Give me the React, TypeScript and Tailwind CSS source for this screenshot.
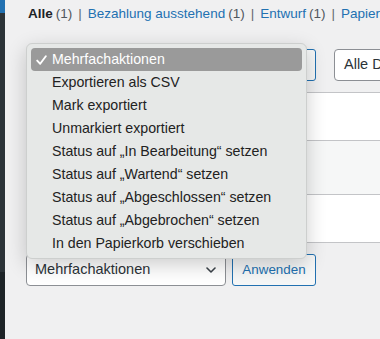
import React from 'react';

const menuItems = [
  'Mehrfachaktionen',
  'Exportieren als CSV',
  'Mark exportiert',
  'Unmarkiert exportiert',
  'Status auf „In Bearbeitung“ setzen',
  'Status auf „Wartend“ setzen',
  'Status auf „Abgeschlossen“ setzen',
  'Status auf „Abgebrochen“ setzen',
  'In den Papierkorb verschieben',
];

const Chevron = () => (
  <svg width="10" height="6" viewBox="0 0 10 6" fill="none">
    <path d="M1 1 L5 5 L9 1" stroke="#3c434a" strokeWidth="1.6" strokeLinecap="round" strokeLinejoin="round" />
  </svg>
);

const Check = () => (
  <svg width="11" height="10" viewBox="0 0 11 10" fill="none">
    <path d="M1.2 5.6 L4.2 8.8 L9.8 1.2" stroke="#ffffff" strokeWidth="1.9" strokeLinecap="round" strokeLinejoin="round" />
  </svg>
);

const BulkSelect = () => (
  <div className="flex h-[32px] w-[200px] shrink-0 items-center justify-between rounded-[4px] border border-[#8c8f94] bg-white pl-[8px] pr-[9px] text-[14.5px] text-[#2c3338]">
    <span>Mehrfachaktionen</span>
    <Chevron />
  </div>
);

const ApplyButton = () => (
  <button className="ml-[6px] flex h-[32px] w-[84px] shrink-0 items-center justify-center rounded-[3px] border border-[#2271b1] bg-[#f6f7f7] text-[13.4px] text-[#2271b1]">
    Anwenden
  </button>
);

export default function App() {
  return (
    <div className="flex h-[339px] w-[380px] overflow-hidden bg-[#f0f0f1] font-['Liberation_Sans',Arial,sans-serif]">
      {/* Admin sidebar edge */}
      <aside className="flex w-[5px] shrink-0 flex-col bg-[#1d2327]">
        <div className="h-[13px] bg-[#2271b1]" />
        <div className="h-[259px] bg-[#2c3338]" />
      </aside>

      <main className="relative min-w-0 flex-1 pl-[21px]">
        {/* Status filters */}
        <ul className="flex whitespace-nowrap pl-[2px] pt-[5px] text-[13.5px] leading-[18px] text-[#50575e]">
          <li>
            <span className="font-bold text-[#1d2327]">Alle</span>
            <span className="ml-[3px]">(1)</span>
            <span className="mx-[6px] text-[#646970]">|</span>
          </li>
          <li>
            <span className="text-[#2271b1]">Bezahlung ausstehend</span>
            <span className="ml-[3px]">(1)</span>
            <span className="mx-[6px] text-[#646970]">|</span>
          </li>
          <li>
            <span className="text-[#2271b1]">Entwurf</span>
            <span className="ml-[3px]">(1)</span>
            <span className="mx-[6px] text-[#646970]">|</span>
          </li>
          <li>
            <span className="text-[#2271b1]">Papierkorb</span>
            <span className="ml-[3px]">(1)</span>
          </li>
        </ul>

        {/* Top actions */}
        <div className="mt-[26px] flex items-center">
          <BulkSelect />
          <ApplyButton />
          <div className="ml-[18px] flex h-[32px] w-[160px] shrink-0 items-center rounded-[4px] border border-[#8c8f94] bg-white pl-[9px] text-[14.5px] text-[#2c3338]">
            Alle Daten
          </div>
        </div>

        {/* Orders table */}
        <div className="mt-[11px] w-[500px] border border-[#c3c4c7] bg-white">
          <div className="h-[48px] border-b border-[#c3c4c7]" />
          <div className="h-[54px] border-b border-[#c3c4c7] bg-[#f6f7f7]" />
          <div className="h-[47px]" />
        </div>

        {/* Bottom actions */}
        <div className="mt-[11px] flex items-center">
          <BulkSelect />
          <ApplyButton />
        </div>

        {/* Open native dropdown */}
        <div className="absolute left-[21px] top-[43px] w-[281px] rounded-[6px] border border-[#cdcfce] bg-[#e6e8e7] px-[4px] pb-[3px] pt-[4px] text-[14.2px] text-[#222222] shadow-[0_6px_20px_rgba(0,0,0,0.2)]">
          {menuItems.map((item, i) => (
            <div
              key={item}
              className={`flex h-[23px] items-center whitespace-nowrap rounded-[4px] pl-[5px] ${
                i === 0 ? 'bg-[#9a9a9a] text-white' : ''
              }`}
            >
              <span className="flex w-[16px] shrink-0 items-center">{i === 0 && <Check />}</span>
              <span>{item}</span>
            </div>
          ))}
        </div>
      </main>
    </div>
  );
}
